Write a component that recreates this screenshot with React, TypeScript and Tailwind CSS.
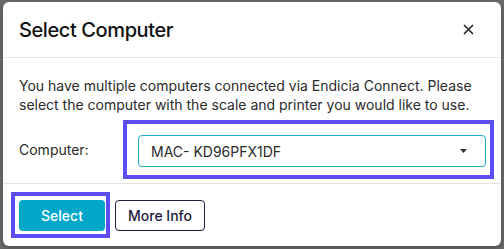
export default function App() {
  return (
    <div className="w-[504px] h-[249px] overflow-hidden bg-[#6b6b6b] pt-[2px] pl-[3px] font-['Inter',sans-serif]">
      <div className="w-[498px] h-[244px] rounded-[6px] bg-white flex flex-col shadow-[0_2px_6px_rgba(0,0,0,0.3)]">
        <div className="h-[56px] flex items-center justify-between px-[16px] border-b border-[#e3e3e3]">
          <h2 className="text-[20px] font-medium text-[#111] tracking-[-0.4px]">Select Computer</h2>
          <button className="w-[22px] h-[22px] flex items-center justify-center mr-[6px]">
            <svg width="11" height="11" viewBox="0 0 11 11">
              <path d="M1 1L10 10M10 1L1 10" stroke="#222" strokeWidth="1.6" />
            </svg>
          </button>
        </div>
        <div className="pt-[18px] pl-[16px] pr-[7px] pb-[4px] border-b border-[#e3e3e3]">
          <p className="text-[14px] leading-[19px] text-[#2b2b2b]">
            You have multiple computers connected via Endicia Connect. Please select the computer with the scale and printer you would like to use.
          </p>
          <div className="flex items-center mt-[6px]">
            <label className="w-[104px] text-[14px] text-[#2b2b2b]">Computer:</label>
            <div className="flex-1 border-4 border-[#5b4cf3] pt-[11px] pb-[8px] pl-[11px] pr-[4px]">
              <div className="h-[32px] rounded-[4px] border border-[#1eaac8] flex items-center justify-between pl-[12px] pr-[18px]">
                <span className="text-[14px] text-[#2b2b2b]">MAC- KD96PFX1DF</span>
                <svg width="7" height="4" viewBox="0 0 7 4">
                  <path d="M0 0H7L3.5 4Z" fill="#333" />
                </svg>
              </div>
            </div>
          </div>
        </div>
        <div className="flex items-start pt-[8px] pl-[8px] gap-[5px]">
          <div className="border-4 border-[#5b4cf3] pt-[4px] pl-[4px] pr-[1px] pb-[3px]">
            <button className="w-[86px] h-[31px] rounded-[4px] bg-[#00a7c9] text-white text-[14px] font-medium">
              Select
            </button>
          </div>
          <button className="mt-[8px] w-[90px] h-[31px] rounded-[4px] border border-[#1c1a40] text-[#1c1a40] text-[14px] font-medium">
            More Info
          </button>
        </div>
      </div>
    </div>
  );
}
